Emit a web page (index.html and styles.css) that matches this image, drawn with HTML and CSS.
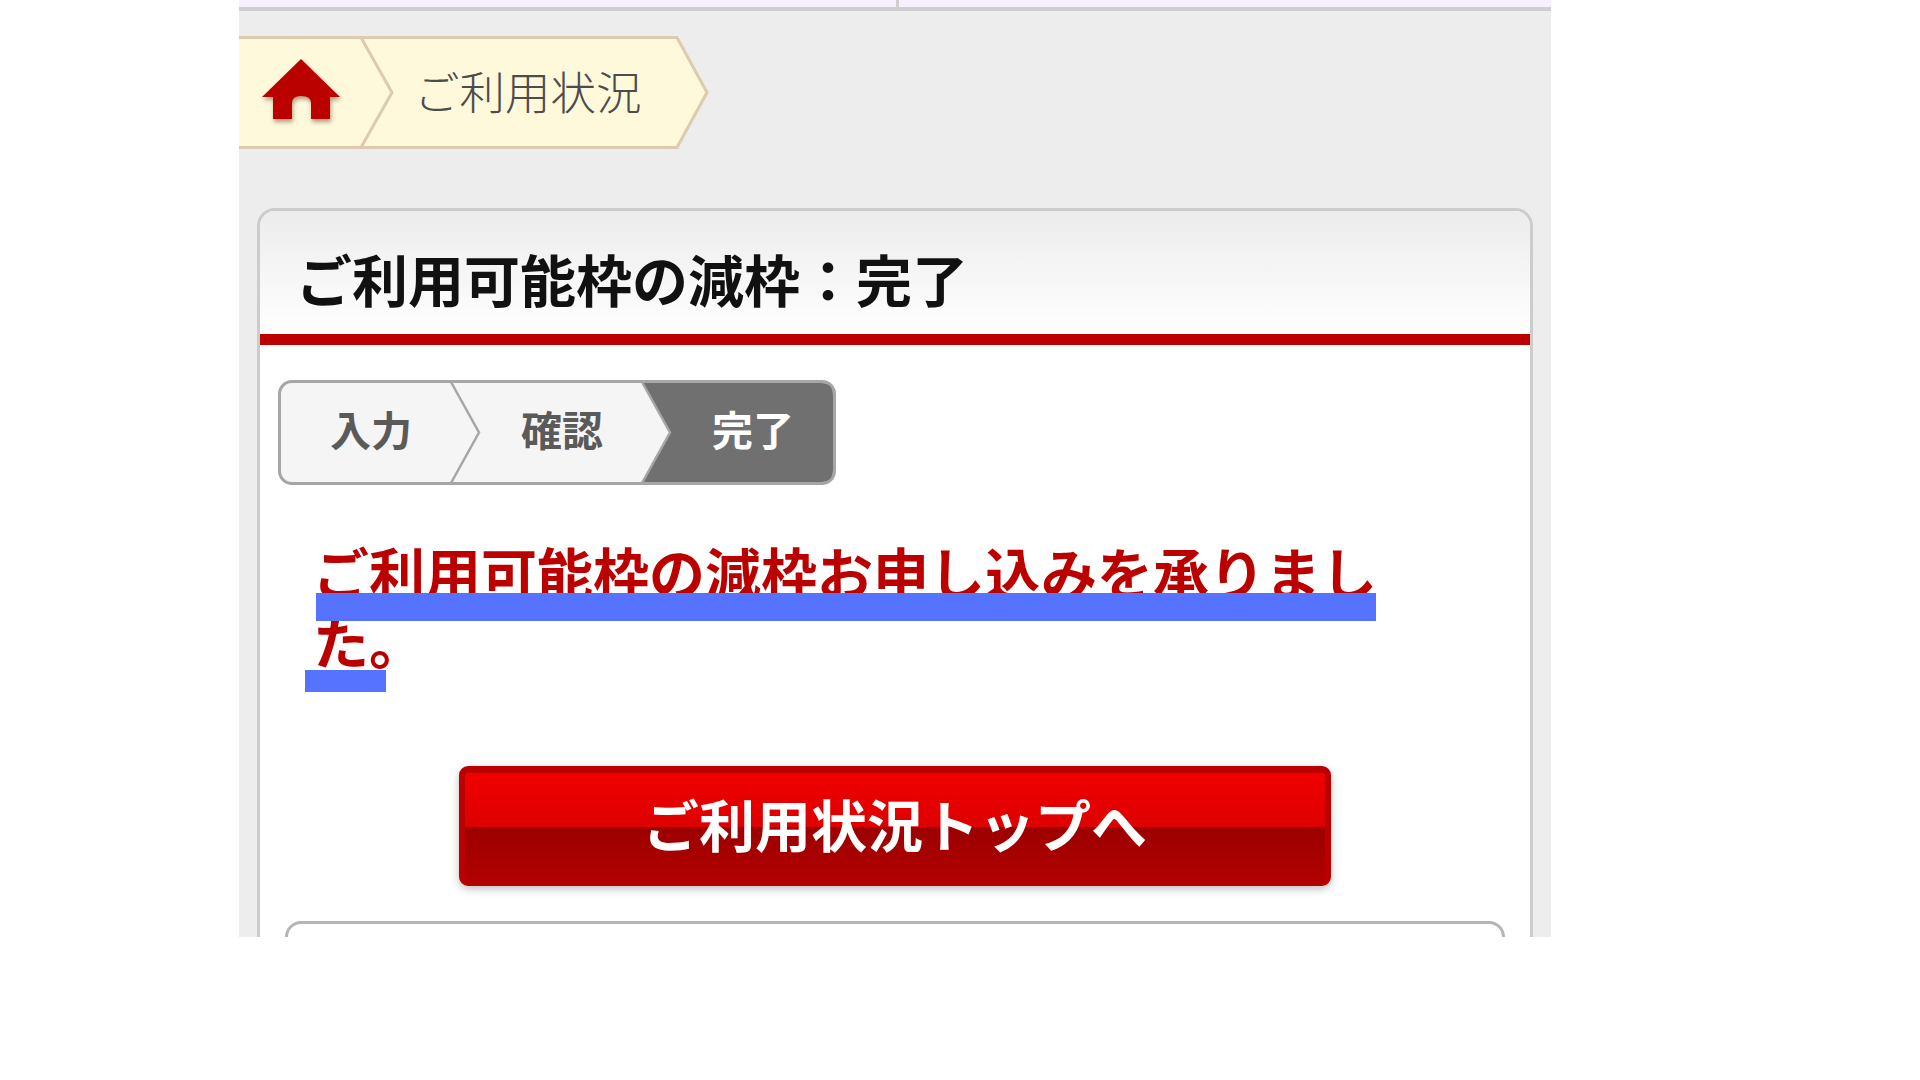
FILE: index.html
```html
<!DOCTYPE html>
<html lang="ja">
	<head>
		<meta charset="utf-8">
		<title>ご利用状況</title>
		<link rel="stylesheet" href="styles.css">
	</head>
	<body>
		<div class="page">

			<div class="topbar">
				<div class="topbar__cell"></div>
				<div class="topbar__cell"></div>
			</div>

			<div class="crumbs">
				<svg class="crumbs__bg" width="470" height="113" viewBox="0 0 470 113">
					<path d="M0 1.5H438L468 56.5L438 111.5H0Z" fill="#fef9db"/>
					<path d="M0 1.5H438L468 56.5L438 111.5H0" fill="none" stroke="#dccbae" stroke-width="3"/>
					<path d="M122 1.5L153 56.5L122 111.5" fill="none" stroke="#dccbae" stroke-width="3"/>
				</svg>
				<a class="crumbs__home" href="#">
					<svg class="home-icon" width="80" height="64" viewBox="0 0 80 64">
						<path d="M40 1L79 39H69V61H50V45Q50 38 40 38Q31 38 31 45V61H12V39H1Z" fill="#bb0000"/>
					</svg>
				</a>
				<span class="crumbs__label">ご利用状況</span>
			</div>

			<div class="card">
				<h1 class="card__head">ご利用可能枠の減枠：完了</h1>

				<div class="steps">
					<svg class="steps__bg" width="558" height="105" viewBox="0 0 558 105">
						<path d="M364 3H543Q555 3 555 15V90Q555 102 543 102H364L392 52.5Z" fill="#707070"/>
						<path d="M173 2L201 52.5L173 103M364 2L392 52.5L364 103" fill="none" stroke="#a6a6a6" stroke-width="2.5"/>
					</svg>
					<span class="steps__item">入力</span>
					<span class="steps__item">確認</span>
					<span class="steps__item steps__item--on">完了</span>
				</div>

				<div class="message">
					ご利用可能枠の減枠お申し込みを承りました。
					<div class="message__mark message__mark--one"></div>
					<div class="message__mark message__mark--two"></div>
				</div>

				<a class="btn" href="#">ご利用状況トップへ</a>

				<div class="box"></div>
			</div>

		</div>
	</body>
</html>
```

FILE: styles.css
```css
body {
	margin: 0;
	background-color: #fff;
	font-family: "Noto Sans CJK JP", "Liberation Sans", sans-serif;
}

a {
	text-decoration: none;
}

.page {
	width: 1312px;
	height: 937px;
	margin-left: 239px;
	overflow: hidden;
	background-color: #ededed;
}

.topbar {
	display: grid;
	grid-template-columns: 657px 1fr;
	height: 7px;
	border-bottom: 4px solid #cfcfcf;
	background-color: #f7f0ff;
}

.topbar__cell + .topbar__cell {
	border-left: 3px solid #cfcfcf;
}

.crumbs {
	position: relative;
	display: flex;
	align-items: center;
	height: 113px;
	margin-top: 25px;
}

.crumbs__bg {
	position: absolute;
	top: 0;
	left: 0;
}

.crumbs__home {
	position: relative;
	display: flex;
	margin-left: 22px;
	margin-top: -5px;
}

.home-icon {
	filter: drop-shadow(1px 3px 2px rgba(90, 40, 20, .45)) blur(.5px);
}

.crumbs__label {
	position: relative;
	margin-left: 73px;
	margin-top: -6px;
	font-size: 45.5px;
	font-weight: 300;
	color: #4c4c4c;
}

.card {
	margin: 59px 18px 0 18px;
	border: 3px solid #ccc;
	border-bottom: 0;
	border-radius: 18px 18px 0 0;
	background-color: #fff;
	overflow: hidden;
}

.card__head {
	display: flex;
	align-items: center;
	box-sizing: border-box;
	height: 134px;
	margin: 0;
	padding: 9px 0 0 36px;
	border-bottom: 11px solid #bb0000;
	background: linear-gradient(#ececec, #fff);
	font-size: 56px;
	font-weight: 700;
	color: #111;
}

.steps {
	position: relative;
	display: flex;
	align-items: center;
	gap: 109px;
	box-sizing: border-box;
	width: 558px;
	height: 105px;
	margin: 35px 0 0 18px;
	padding: 0 0 10px 49px;
	border: 3px solid #a6a6a6;
	border-radius: 14px;
	background-color: #f5f5f5;
}

.steps__bg {
	position: absolute;
	top: -3px;
	left: -3px;
}

.steps__item {
	position: relative;
	font-size: 41px;
	font-weight: 700;
	color: #5a5a5a;
}

.steps__item--on {
	color: #fff;
}

.message {
	position: relative;
	width: 1080px;
	margin: 51px 0 0 53px;
	font-size: 56px;
	font-weight: 700;
	line-height: 69px;
	color: #bb0000;
}

.message__mark {
	position: absolute;
	background-color: #5673ff;
}

.message__mark--one {
	top: 57px;
	left: 3px;
	width: 1060px;
	height: 28px;
}

.message__mark--two {
	top: 134px;
	left: -8px;
	width: 81px;
	height: 22px;
}

.btn {
	display: flex;
	align-items: center;
	justify-content: center;
	box-sizing: border-box;
	width: 872px;
	height: 120px;
	margin: 92px 0 0 199px;
	padding-bottom: 14px;
	border: solid #bb0000;
	border-width: 7px 6px 1px;
	border-radius: 9px;
	background: linear-gradient(#f00000, #dd0000 48%, #9c0000 48%, #b30000);
	box-shadow: 0 3px 8px rgba(0, 0, 0, .25);
	font-size: 56px;
	font-weight: 700;
	color: #fff;
}

.box {
	box-sizing: border-box;
	height: 100px;
	margin: 35px 25px 0 25px;
	border: 3px solid #b5b5b5;
	border-radius: 16px;
}
```
